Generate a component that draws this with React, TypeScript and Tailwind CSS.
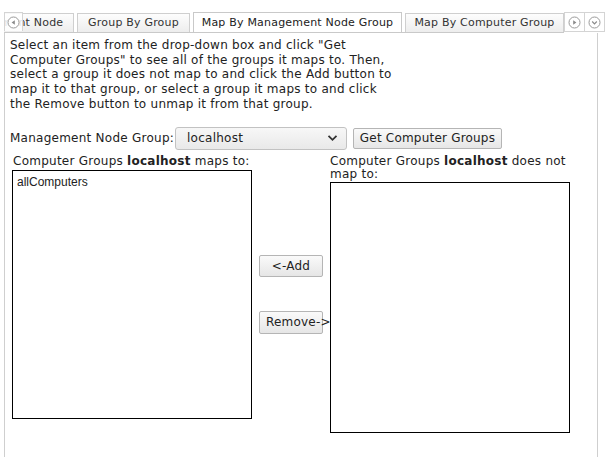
import React from "react";

const font = { fontFamily: '"DejaVu Sans", Verdana, sans-serif' };

const introLines = [
    'Select an item from the drop-down box and click "Get',
    'Computer Groups" to see all of the groups it maps to. Then,',
    "select a group it does not map to and click the Add button to",
    "map it to that group, or select a group it maps to and click",
    "the Remove button to unmap it from that group.",
];

function Tab({ label, active, className = "" }: { label: string; active?: boolean; className?: string }) {
    if (active) {
        return (
            <div
                className={`relative -mb-px flex h-[21px] shrink-0 items-center justify-center border border-b-0 border-[#c9c9c9] bg-white text-[11px] tracking-[0.2px] text-[#222] ${className}`}
            >
                {label}
            </div>
        );
    }
    return (
        <div
            className={`flex h-[19px] shrink-0 items-center justify-center border border-b-0 border-[#cfcfcf] bg-gradient-to-b from-[#fdfdfd] to-[#ededed] text-[11px] tracking-[0.2px] text-[#333] ${className}`}
        >
            {label}
        </div>
    );
}

function CircleArrow({ dir }: { dir: "left" | "right" | "down" }) {
    return (
        <svg width="13" height="13" viewBox="0 0 13 13">
            <circle cx="6.5" cy="6.5" r="5.5" fill="#fff" stroke="#9a9a9a" strokeWidth="1" />
            {dir === "left" && <path d="M7.8 4.2 L4.6 6.5 L7.8 8.8 Z" fill="#8a8a8a" />}
            {dir === "right" && <path d="M5.2 4.2 L8.4 6.5 L5.2 8.8 Z" fill="#8a8a8a" />}
            {dir === "down" && <path d="M4.2 5.5 L6.5 7.8 L8.8 5.5" fill="none" stroke="#8a8a8a" strokeWidth="1.2" />}
        </svg>
    );
}

function Btn({ children, className = "" }: { children: React.ReactNode; className?: string }) {
    return (
        <button
            className={`flex items-center whitespace-nowrap rounded-[2px] border border-[#b5b5b5] bg-gradient-to-b from-[#fafafa] to-[#e6e6e6] text-[12px] tracking-[0.2px] text-[#222] ${className}`}
        >
            {children}
        </button>
    );
}

export default function App() {
    return (
        <div className="h-[457px] w-[612px] overflow-hidden bg-white" style={font}>
            {/* tab strip */}
            <div className="flex pt-[12px]">
                <div className="relative ml-[4px] flex w-[560px] items-end overflow-hidden border-b border-[#c9c9c9]">
                    <div className="ml-[-59px] flex items-end gap-[3px]">
                        <Tab label="Management Node" className="w-[129px]" />
                        <Tab label="Group By Group" className="w-[113px]" />
                        <Tab label="Map By Management Node Group" active className="w-[209px]" />
                        <Tab label="Map By Computer Group" className="w-[159px]" />
                    </div>
                    <div className="absolute left-0 top-0 flex h-[19px] w-[19px] items-center justify-center border border-b-0 border-[#d4d4d4] bg-white/85">
                        <CircleArrow dir="left" />
                    </div>
                </div>
                <div className="flex h-[20px] items-center justify-center border border-[#d4d4d4] bg-white px-[3px]">
                    <CircleArrow dir="right" />
                </div>
                <div className="flex h-[20px] items-center justify-center border border-l-0 border-[#d4d4d4] bg-white px-[3px]">
                    <CircleArrow dir="down" />
                </div>
            </div>

            {/* content panel */}
            <div className="ml-[4px] h-[430px] w-[594px] border-x border-[#cfcfcf] pl-[5px] pt-[5px] text-[12px] tracking-[0.25px] text-[#222]">
                <p className="leading-[14.7px]">
                    {introLines.map((line) => (
                        <span key={line} className="block whitespace-nowrap">
                            {line}
                        </span>
                    ))}
                </p>

                <div className="mt-[15px] flex items-center">
                    <span className="w-[163px] whitespace-nowrap">Management Node Group:</span>
                    <div className="ml-[2px] flex h-[23px] w-[172px] items-center justify-between rounded-[3px] border border-[#c2c2c2] bg-gradient-to-b from-[#f7f7f7] to-[#e9e9e9] pl-[11px] pr-[8px]">
                        <span>localhost</span>
                        <svg width="11" height="8" viewBox="0 0 11 8">
                            <path d="M1.5 1.8 L5.5 5.8 L9.5 1.8" fill="none" stroke="#333" strokeWidth="1.8" />
                        </svg>
                    </div>
                    <Btn className="ml-[6px] h-[21px] w-[149px] justify-center">Get Computer Groups</Btn>
                </div>

                <div className="mt-[2px] flex">
                    <div className="ml-[2px] w-[240px]">
                        <div className="whitespace-nowrap pl-px leading-[18px]">
                            Computer Groups <b>localhost</b> maps to:
                        </div>
                        <div
                            className="h-[249px] w-[240px] border border-black px-[4px] pt-[2px] text-[12px] tracking-normal"
                            style={{ fontFamily: '"Liberation Sans", Arial, sans-serif' }}
                        >
                            allComputers
                        </div>
                    </div>
                    <div className="w-[78px] pl-[7px] pt-[103px]">
                        <Btn className="h-[22px] w-[64px] justify-center">&lt;-Add</Btn>
                        <Btn className="mt-[34px] h-[23px] w-[64px] pl-[6px]">Remove-&gt;</Btn>
                    </div>
                    <div className="w-[240px]">
                        <div className="whitespace-nowrap pt-[3px] leading-[13px]">
                            Computer Groups <b>localhost</b> does not
                            <br />
                            map to:
                        </div>
                        <div className="mt-[1px] h-[251px] w-[240px] border border-black" />
                    </div>
                </div>
            </div>
        </div>
    );
}
